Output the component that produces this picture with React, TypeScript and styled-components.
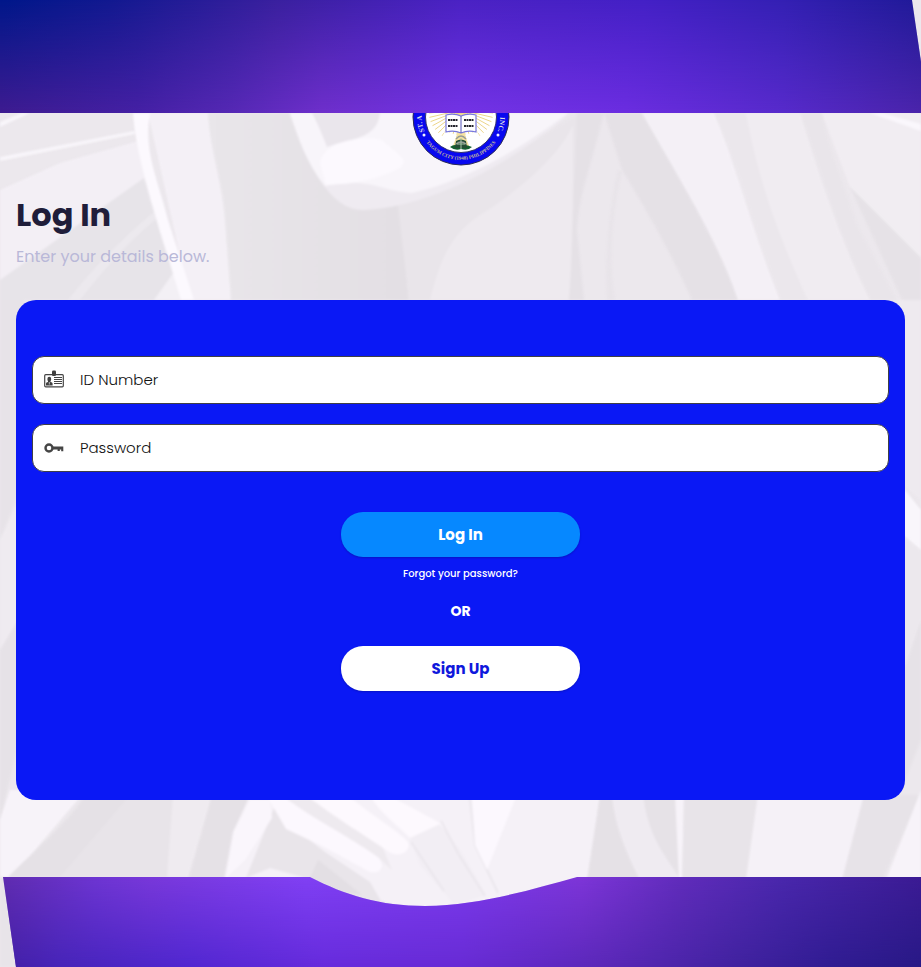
import React from "react";
import styled, { createGlobalStyle } from "styled-components";

const GlobalStyle = createGlobalStyle`
  *, *::before, *::after { box-sizing: border-box; }
  body {
    margin: 0;
    background: #ece8ed;
    font-family: Poppins, Inter, "Open Sans", sans-serif;
  }
`;

const Page = styled.div`
  position: relative;
  isolation: isolate;
  display: flex;
  flex-direction: column;
  min-height: 100vh;
`;

const BackdropArt = styled.svg`
  position: absolute;
  inset: 0;
  z-index: -1;
  width: 100%;
  height: 100%;
`;

const Band = styled.div<{ $height: number }>`
  flex: none;
  height: ${(p) => p.$height}px;

  svg {
    display: block;
    width: 100%;
    height: 100%;
  }
`;

const Main = styled.main`
  flex: 1;
  display: flex;
  flex-direction: column;
  padding: 0 16px 77px;
`;

const SealWindow = styled.div`
  display: flex;
  justify-content: center;
  align-items: flex-end;
  height: 53px;
  overflow: hidden;

  svg {
    flex: none;
    display: block;
  }
`;

const Title = styled.h1`
  margin: 24px 0 0;
  font-size: 32px;
  line-height: 50px;
  font-weight: 700;
  color: #1f1d3a;
`;

const Subtitle = styled.p`
  margin: 5px 0 31px;
  font-size: 16px;
  line-height: 24px;
  color: #b9b8d8;
`;

const Card = styled.form`
  flex: 1 0 auto;
  display: flex;
  flex-direction: column;
  align-items: center;
  min-height: 500px;
  padding: 56px 16px;
  border-radius: 20px;
  background: #0a18f5;
`;

const Fields = styled.div`
  align-self: stretch;
  display: grid;
  gap: 20px;
  margin-bottom: 40px;
`;

const Field = styled.label`
  display: flex;
  align-items: center;
  gap: 16px;
  height: 48px;
  padding: 0 11px;
  border: 1px solid #3f3f46;
  border-radius: 12px;
  background: #fff;

  svg {
    flex: none;
  }
`;

const TextInput = styled.input`
  flex: 1;
  min-width: 0;
  height: 100%;
  padding: 0 0 2px;
  border: 0;
  outline: 0;
  background: transparent;
  font: inherit;
  font-size: 15px;
  font-weight: 300;
  color: #1d1d1f;

  &::placeholder {
    color: #111;
    opacity: 1;
  }
`;

const PillButton = styled.button<{ $tone: "primary" | "plain" }>`
  width: 239px;
  height: 45px;
  padding: 0;
  border: 0;
  border-radius: 22px;
  font: inherit;
  font-size: 15px;
  font-weight: 700;
  color: ${(p) => (p.$tone === "primary" ? "#fff" : "#0f18dc")};
  background: ${(p) => (p.$tone === "primary" ? "#0688ff" : "#fff")};
  box-shadow: 0 1px 2px rgba(0, 0, 0, 0.2);
  cursor: pointer;
`;

const ForgotLink = styled.a`
  margin-top: 9px;
  font-size: 10px;
  line-height: 16px;
  font-weight: 500;
  color: #fff;
  text-decoration: none;
`;

const Divider = styled.p`
  margin: 19px 0 25px;
  font-size: 14px;
  line-height: 20px;
  font-weight: 700;
  color: #fff;
`;

function Backdrop() {
  return (
    <BackdropArt viewBox="0 0 921 967" preserveAspectRatio="none" aria-hidden="true">
      <defs>
        <filter id="soften" x="-5%" y="-5%" width="110%" height="110%" colorInterpolationFilters="sRGB">
          <feGaussianBlur stdDeviation="1.2" />
        </filter>
        <linearGradient id="robe" x1="0" x2="1">
          <stop offset="0" stopColor="#e9e6ea" />
          <stop offset="1" stopColor="#e3dfe4" />
        </linearGradient>
      </defs>
      <rect width="921" height="967" fill="#ece8ed" />
      <g filter="url(#soften)">
        {/* upper left hair strands */}
        <path d="M0 190 L60 163 L142 140 L150 178 L0 282Z" fill="#f3eff5" />
        <path d="M0 280 L144 178 L182 300 L0 300Z" fill="#e7e4e9" />
        <path d="M68 300 C95 265 125 236 156 210 L160 216 C130 240 105 268 80 300Z" fill="#ece9ee" />
        <path d="M154 300 L174 272 L182 300Z" fill="#f3f0f5" />
        <path d="M0 122 L22 113 L30 113 L0 127Z" fill="#f8f5fa" />
        <path d="M0 157 L134 131 L135 134 L0 161Z" fill="#f8f5fa" />
        <path d="M148 113 L208 113 C210 150 222 180 225 220 L231 300 L190 300Z" fill="#f4f0f6" />
        <path d="M133 113 L150 113 C143 150 158 180 168 220 L194 300 L181 300 C160 230 136 160 133 113Z" fill="#fcf9fe" />
        {/* collar and chin */}
        <path d="M208 113 L290 113 C310 175 340 215 380 207 L400 200 L409 300 L231 300 L225 220 C222 180 210 150 208 113Z" fill="url(#robe)" />
        <path d="M380 207 C430 203 500 165 577 113 L577 300 L409 300 L398 205Z" fill="#e9e5ea" />
        <path d="M430 300 C440 260 450 235 480 215 C520 190 560 155 573 125 L573 300Z" fill="#eeeaef" />
        <path d="M290 113 C308 165 330 212 365 210 C430 207 510 165 570 113Z" fill="#efebf1" />
        <path d="M290 113 L568 113 C520 150 465 181 412 193 C382 192 370 176 325 186 C306 163 298 137 290 113Z" fill="#f8f5fa" />
        <path d="M312 113 L380 113 C377 140 350 138 327 147 C322 134 318 124 312 113Z" fill="#eae6ec" />
        <path d="M320 163 C324 138 370 136 382 140 C401 157 409 159 400 168 C370 183 345 184 326 185Z" fill="#fcf9fe" />
        {/* neckline folds */}
        <path d="M577 113 L604 113 C590 170 580 190 577 230 L584 300 L569 300 C573 250 572 200 575 170Z" fill="#e5e1e6" />
        <path d="M618 170 L622 172 C612 210 608 260 615 300 L607 300 C604 260 610 205 618 170Z" fill="#e8e4e9" />
        <path d="M604 113 L642 113 C680 180 720 245 738 300 L692 300 C665 240 640 200 622 170Z" fill="#e5e1e6" />
        <path d="M642 113 L714 113 C738 170 755 240 780 300 L738 300 C718 240 680 180 642 113Z" fill="#f4f0f6" />
        <path d="M714 113 L746 113 C765 190 785 245 808 300 L780 300 C758 240 740 170 714 113Z" fill="#ebe7ec" />
        <path d="M746 113 L800 113 C820 180 840 240 870 300 L808 300 C780 240 758 180 746 113Z" fill="#f0ecf1" />
        <path d="M800 113 L822 113 C832 160 847 190 857 225 L897 300 L870 300 C840 240 820 170 800 113Z" fill="#e9e5ea" />
        <path d="M822 113 L921 113 L921 258 L850 187Z" fill="#f1edf2" />
        <path d="M850 187 L921 258 L921 320 L902 300Z" fill="#e6e2e7" />
        <path d="M870 113 L882 113 L921 124 L921 131Z" fill="#faf7fc" />
        {/* side slivers beside the card */}
        <path d="M0 300 H24 V480 L0 540Z" fill="#e7e3e8" />
        <path d="M0 540 L24 490 V610 L0 650Z" fill="#efebf0" />
        <path d="M0 650 L24 610 V720 L0 820Z" fill="#e6e2e7" />
        <path d="M897 300 H921 V500 L897 480Z" fill="#eeeaef" />
        <path d="M897 480 L921 510 V550 L897 530Z" fill="#f9f6fb" />
        <path d="M897 530 L921 550 V620 L897 690Z" fill="#ece8ed" />
        <path d="M897 690 L921 620 V740 L897 800Z" fill="#e6e2e7" />
        {/* sleeve and hands */}
        <path d="M0 820 L10 790 H86 L12 877 H0Z" fill="#f7f3f9" />
        <path d="M86 795 H140 L62 877 H8 C35 850 65 825 86 795Z" fill="#e5e1e6" />
        <path d="M130 795 H174 L168 877 H60Z" fill="#e8e4e9" />
        <path d="M173 795 H212 L188 877 H167Z" fill="#efebf0" />
        <path d="M212 795 H252 L233 832 L224 880 H188Z" fill="#e5e1e6" />
        <path d="M250 795 H600 L587 880 L430 915 L310 880 L224 880 L233 832Z" fill="#f5f1f7" />
        <path d="M274 808 L290 825 L325 852 L370 882 L385 908 L320 890 L302 877 L270 868 L246 878Z" fill="#e9e5ea" />
        <path d="M318 860 L362 895 L340 892 L310 878Z" fill="#e3dfe4" />
        <path d="M250 800 H270 L272 818 L245 860 L226 878 L234 832Z" fill="#faf6fc" />
        <path d="M268 798 H288 C320 822 350 835 378 857 C387 868 378 876 368 871 L322 846 L286 829Z" fill="#fcf8fe" />
        <path d="M287 799 H310 L382 846 L392 870 L378 857 C345 834 315 820 287 799Z" fill="#eeeaef" />
        <path d="M309 797 H350 C367 812 400 832 408 842 C412 852 398 858 389 852 C360 832 335 818 309 797Z" fill="#fdf9fe" />
        <path d="M371 797 H392 L442 824 L450 838 L410 838 C396 824 380 813 371 797Z" fill="#fdf9fe" />
        <path d="M410 838 L440 824 L462 853 L486 895 L455 905 L420 865Z" fill="#f2eef4" />
        <path d="M411 842 L444 891 M441 821 L459 855 L485 896 M470 799 L475 845 L498 893" fill="none" stroke="#ebe7ed" strokeWidth="2" />
        <path d="M472 797 H516 L487 870 L475 845Z" fill="#fcf8fe" />
        {/* lower robe folds */}
        <path d="M600 795 H612 C615 825 625 850 640 880 H587Z" fill="#e5e1e6" />
        <path d="M612 795 H644 C648 830 664 855 681 880 H640 C625 850 615 825 612 795Z" fill="#efebf1" />
        <path d="M643 795 H676 L681 880 C657 846 648 830 643 795Z" fill="#e6e2e7" />
        <path d="M675 795 H684 L682 880 H679Z" fill="#f7f3f9" />
        <path d="M684 795 H758 L746 880 H682Z" fill="#e8e4e9" />
        <path d="M758 795 H864 L842 880 H746Z" fill="#f5f1f7" />
        <path d="M864 795 H921 L882 880 H842Z" fill="#e7e3e8" />
        <path d="M921 790 V880 H886Z" fill="#f7f3f9" />
        <path d="M0 877 L6 877 L18 967 H0Z" fill="#e8e4e9" />
      </g>
    </BackdropArt>
  );
}

type Stop = [number, string];

const headerTop: Stop[] = [[0, "#00178a"], [0.12, "#121990"], [0.3, "#3a209f"], [0.5, "#4b22c4"], [0.7, "#4420c6"], [0.85, "#3420b4"], [1, "#201a98"]];
const headerBottom: Stop[] = [[0, "#3d1b90"], [0.15, "#4520a4"], [0.25, "#5528b4"], [0.35, "#6e2fcb"], [0.5, "#7333e5"], [0.68, "#6b2de0"], [0.85, "#572acb"], [1, "#4a24aa"]];
const footerTop: Stop[] = [[0, "#5f2cb0"], [0.1, "#6d35d2"], [0.16, "#7838da"], [0.33, "#8040f4"], [0.5, "#7b3aec"], [0.63, "#7d35d8"], [0.74, "#602cbb"], [0.85, "#4927ac"], [1, "#3b1b94"]];
const footerBottom: Stop[] = [[0, "#421fa6"], [0.06, "#4624b8"], [0.2, "#5027d0"], [0.35, "#662bdc"], [0.5, "#672bd4"], [0.65, "#5a28b8"], [0.8, "#40229f"], [0.9, "#301c92"], [1, "#281986"]];

interface PurpleProps {
  id: string;
  height: number;
  shape: string;
  top: Stop[];
  bottom: Stop[];
}

function PurpleShape({ id, height, shape, top, bottom }: PurpleProps) {
  const stops = (list: Stop[]) => list.map(([at, color]) => <stop key={at} offset={at} stopColor={color} />);
  return (
    <svg viewBox={`0 0 921 ${height}`} preserveAspectRatio="none" aria-hidden="true">
      <defs>
        <linearGradient id={`${id}-top`}>{stops(top)}</linearGradient>
        <linearGradient id={`${id}-bottom`}>{stops(bottom)}</linearGradient>
        <linearGradient id={`${id}-fade`} x2="0" y2="1">
          <stop offset="0" stopColor="#fff" stopOpacity="0" />
          <stop offset="1" stopColor="#fff" stopOpacity="1" />
        </linearGradient>
        <mask id={`${id}-mask`} maskUnits="userSpaceOnUse" x="0" y="0" width="921" height={height}>
          <rect width="921" height={height} fill={`url(#${id}-fade)`} />
        </mask>
      </defs>
      <path d={shape} fill={`url(#${id}-top)`} />
      <path d={shape} fill={`url(#${id}-bottom)`} mask={`url(#${id}-mask)`} />
    </svg>
  );
}

function Seal() {
  const rays = Array.from({ length: 40 }, (_, i) => (i * 9 * Math.PI) / 180);
  return (
    <svg width="98" height="98" viewBox="0 0 98 98" role="img" aria-label="School seal">
      <defs>
        <path id="seal-left" d="M12.4 63.3 A39 39 0 0 1 49 10" />
        <path id="seal-right" d="M49 10 A39 39 0 0 1 85.6 63.3" />
        <path id="seal-lower" d="M12.6 71.7 A43 43 0 0 0 85.4 71.7" />
      </defs>
      <circle cx="49" cy="49" r="48" fill="#0808f0" stroke="#2b2b55" strokeWidth="1" />
      <circle cx="49" cy="49" r="35.5" fill="#fff" stroke="#33336a" strokeWidth="1" />
      <g stroke="#ecd589" strokeWidth="1">
        {rays.map((a) => (
          <line key={a} x1="49" y1="42" x2={49 + 32 * Math.cos(a)} y2={45 + 28 * Math.sin(a)} />
        ))}
      </g>
      <path d="M33 63 L45 67 L40 77 H58 L53 67 L65 63 L69 72 L58 82 H40 L29 72Z" fill="#fff" />
      <path d="M46 64 H52 L57 78 H41Z" fill="#f6e2a0" />
      <path d="M34 47 Q42 45 49 48 Q56 45 64 47 V64 Q56 62 49 65 Q42 62 34 64Z" fill="#fff" stroke="#7777dc" strokeWidth="1.2" />
      <path d="M49 48 V65" stroke="#5555b8" />
      <path d="M36 52 H46 M52 52 H62 M36 58 H46 M52 58 H62" stroke="#25252e" strokeWidth="1.8" strokeDasharray="2 .5" />
      <path d="M38 79 Q43 75 48 79 Q51 75 60 79 Q56 83 49 81 Q43 83 38 79Z" fill="#145f30" />
      <path d="M44 73 Q49 70 54 73 L55 80 H43Z" fill="#254d35" />
      <path d="M44 71 Q49 65 54 71 M44 76 Q49 72 54 76" fill="none" stroke="#969c98" strokeWidth="1.3" />
      <path d="M49 70 V81 M45 76 H53" stroke="#a8c5a9" strokeWidth="1" />
      <g fill="#dcdce4" fontFamily="Liberation Serif, serif" fontSize="7" fontWeight="700">
        <text>
          <textPath href="#seal-left">ST. A</textPath>
        </text>
        <text textAnchor="end">
          <textPath href="#seal-right" startOffset="100%">INC.</textPath>
        </text>
      </g>
      <text fill="#c5bd96" fontFamily="Liberation Serif, serif" fontSize="5" fontWeight="700" textAnchor="middle">
        <textPath href="#seal-lower" startOffset="50%">TAGUM CITY (1948) PHILIPPINES</textPath>
      </text>
      <circle cx="12" cy="67" r="1.5" fill="#f0f0ff" />
      <circle cx="86" cy="67" r="1.5" fill="#f0f0ff" />
    </svg>
  );
}

function IdCardIcon() {
  return (
    <svg width="20" height="20" viewBox="0 -1 20 20" aria-hidden="true">
      <rect x=".7" y="3.7" width="18.6" height="12.1" rx="1" fill="#fff" stroke="#454545" strokeWidth="1.2" />
      <rect x="8" y="-.5" width="4" height="5.5" rx="1.3" fill="#404040" />
      <path d="M2 14.5 V12.5 Q2 11.5 4 11.1 V10.2 Q3.4 9.5 3.4 8 Q3.4 5.7 5.3 5.7 Q7.2 5.7 7.2 8 Q7.2 9.5 6.5 10.2 V11.1 Q8.6 11.5 8.6 12.5 V14.5Z" fill="#404040" />
      <path d="M5.3 11 V13.5" stroke="#ddd" strokeWidth=".8" />
      <path d="M10 6.5 H18 M10 8.5 H18 M10 10.5 H18 M10 12.5 H18" stroke="#454545" strokeWidth="1" />
    </svg>
  );
}

function KeyIcon() {
  return (
    <svg width="20" height="20" viewBox="0 0 20 20" aria-hidden="true">
      <circle cx="5" cy="10" r="3.5" fill="none" stroke="#454545" strokeWidth="2.4" />
      <path d="M8.6 8.6 H19.3 V13.2 H17.2 V11.5 H15.8 V13 H13.6 V11.5 H8.6Z" fill="#454545" />
    </svg>
  );
}

export default function App() {
  return (
    <>
      <GlobalStyle />
      <Page>
        <Backdrop />
        <Band as="header" $height={113}>
          <PurpleShape id="header" height={113} shape="M0 0 H912 L921 62 V113 H0Z" top={headerTop} bottom={headerBottom} />
        </Band>
        <Main>
          <SealWindow>
            <Seal />
          </SealWindow>
          <Title>Log In</Title>
          <Subtitle>Enter your details below.</Subtitle>
          <Card onSubmit={(e: React.FormEvent) => e.preventDefault()}>
            <Fields>
              <Field>
                <IdCardIcon />
                <TextInput type="text" name="id" placeholder="ID Number" aria-label="ID Number" />
              </Field>
              <Field>
                <KeyIcon />
                <TextInput type="password" name="password" placeholder="Password" aria-label="Password" />
              </Field>
            </Fields>
            <PillButton type="submit" $tone="primary">Log In</PillButton>
            <ForgotLink href="#forgot">Forgot your password?</ForgotLink>
            <Divider>OR</Divider>
            <PillButton type="button" $tone="plain">Sign Up</PillButton>
          </Card>
        </Main>
        <Band as="footer" $height={90}>
          <PurpleShape
            id="footer"
            height={90}
            shape="M3 0 H310 C345 18 380 29 425 29 C480 28 530 13 577 0 H921 V90 H16Z"
            top={footerTop}
            bottom={footerBottom}
          />
        </Band>
      </Page>
    </>
  );
}
